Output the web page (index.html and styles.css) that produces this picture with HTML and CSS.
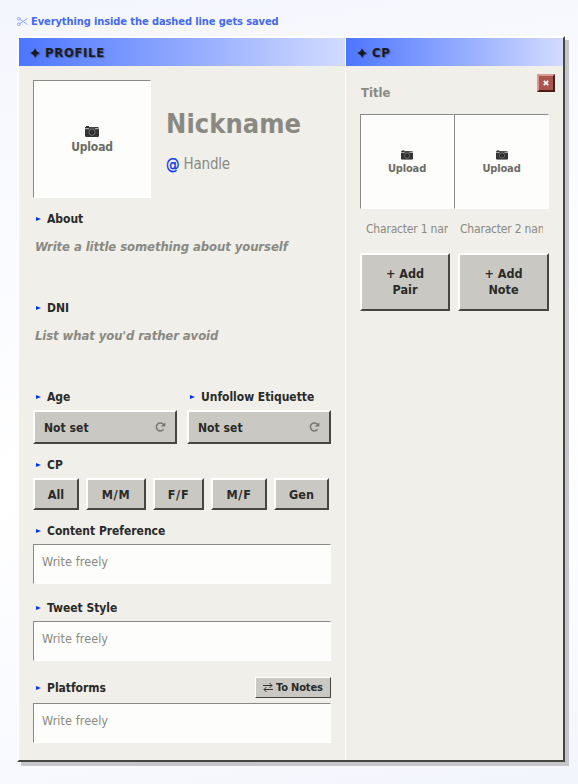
FILE: index.html
```html
<!DOCTYPE html>
<html lang="en">
<head>
<meta charset="utf-8">
<title>Profile editor</title>
<link rel="stylesheet" href="styles.css">
</head>
<body>
<svg class="defs" aria-hidden="true">
  <symbol id="camera" viewBox="0 0 14 11"><path d="M0 1h1V0h3v1h8.500q1.500 0 1.500 1.500V9.500Q14 11 12.500 11h-11Q0 11 0 9.500z" fill="#333"/><path d="M0 2h14v1.200H0z" fill="#aaa"/><path d="M4 1h6v3H4z" fill="#444"/><circle cx="7" cy="6.200" r="3" fill="#222" stroke="#999" stroke-width=".7"/><circle cx="7" cy="6.200" r="1" fill="#444"/></symbol>
  <symbol id="arrow" viewBox="0 0 5 4"><path d="M0 0 5 2 0 4z" fill="#0433ee"/></symbol>
  <symbol id="star" viewBox="0 0 10 10"><path d="M5 0Q6 4 10 5 6 6 5 10 4 6 0 5 4 4 5 0z" fill="#1c1c1c"/></symbol>
  <symbol id="reload" viewBox="0 0 11 10"><path d="M8.600 7.300A4 4 0 1 1 8.500 2.500" fill="none" stroke="#77776f" stroke-width="1.500"/><path d="M5.800 4.600H10.400V.6z" fill="#77776f"/></symbol>
</svg>
<p class="hint"><svg class="scissors" viewBox="0 0 11 9"><g fill="none" stroke="currentColor" stroke-width=".9"><circle cx="1.800" cy="1.700" r="1.300"/><circle cx="1.800" cy="7.300" r="1.300"/><path d="M3 2.400 10.500 7.600M3 6.600 10.500 1.400"/></g></svg><span>Everything inside the dashed line gets saved</span></p>
<main class="window">
  <section class="column profile">
    <h2 class="bar"><svg class="star"><use href="#star"/></svg>PROFILE</h2>
    <div class="body">
      <div class="identity">
        <div class="upload"><svg class="camera" viewBox="0 0 14 11"><use href="#camera"/></svg><span>Upload</span></div>
        <div class="names"><div class="nickname">Nickname</div><div class="handle"><span class="at">@</span><span>Handle</span></div></div>
      </div>
      <div class="label about"><svg><use href="#arrow"/></svg><span>About</span></div>
      <div class="prose">Write a little something about yourself</div>
      <div class="label"><svg><use href="#arrow"/></svg><span>DNI</span></div>
      <div class="prose">List what you'd rather avoid</div>
      <div class="pair">
        <div><div class="label"><svg><use href="#arrow"/></svg><span>Age</span></div><div class="select raised"><span>Not set</span><svg><use href="#reload"/></svg></div></div>
        <div><div class="label"><svg><use href="#arrow"/></svg><span>Unfollow Etiquette</span></div><div class="select raised"><span>Not set</span><svg><use href="#reload"/></svg></div></div>
      </div>
      <div class="label cp"><svg><use href="#arrow"/></svg><span>CP</span></div>
      <div class="chips"><div class="raised">All</div><div class="raised wide">M/M</div><div class="raised wide">F/F</div><div class="raised wide">M/F</div><div class="raised">Gen</div></div>
      <div class="label content"><svg><use href="#arrow"/></svg><span>Content Preference</span></div>
      <div class="field">Write freely</div>
      <div class="label tweet"><svg><use href="#arrow"/></svg><span>Tweet Style</span></div>
      <div class="field">Write freely</div>
      <div class="platforms"><div class="label"><svg><use href="#arrow"/></svg><span>Platforms</span></div><div class="to-notes"><svg viewBox="0 0 10 9"><path d="M0 2.500H9M6.500 0 9 2.500 6.500 5M10 6.500H1M3.500 4 1 6.500 3.500 9" fill="none" stroke="#333" stroke-width="1"/></svg><span>To Notes</span></div></div>
      <div class="field">Write freely</div>
    </div>
  </section>
  <section class="column side">
    <h2 class="bar"><svg class="star"><use href="#star"/></svg>CP</h2>
    <div class="body">
      <div class="title-row"><span class="title">Title</span><div class="close"><svg viewBox="0 0 6 6"><path d="M.8.8 5.200 5.200M5.200.8.8 5.200" stroke="#fff" stroke-width="1.800"/></svg></div></div>
      <div class="characters">
        <div><div class="upload small"><svg class="camera" viewBox="0 0 14 11"><use href="#camera"/></svg><span>Upload</span></div><div class="char-name">Character 1 name</div></div>
        <div><div class="upload small"><svg class="camera" viewBox="0 0 14 11"><use href="#camera"/></svg><span>Upload</span></div><div class="char-name">Character 2 name</div></div>
      </div>
      <div class="actions"><div class="raised">+ Add<br>Pair</div><div class="raised">+ Add<br>Note</div></div>
    </div>
  </section>
</main>
</body>
</html>
```
FILE: styles.css
```css
* { box-sizing: border-box; }
body { margin: 0; height: 784px; overflow: hidden; padding: 12px 13px 0 17px; background: linear-gradient(170deg, #f4f6fd 0%, #fafbff 28%, #fff 55%, #fafbff 80%, #f3f5fc 100%); color: #2a2a28; font: bold 12px/16px "DejaVu Sans Condensed", "DejaVu Sans", sans-serif; }
svg { display: block; flex: none; }
.defs { display: none; }
.hint { display: flex; align-items: center; height: 18px; margin: 0 0 6px; color: #4169f5; font-size: 11px; letter-spacing: -.09px; white-space: nowrap; }
.hint span { padding-top: 1px; }
.scissors { width: 11px; height: 9px; margin-right: 3px; opacity: .65; }
.window { display: grid; grid-template-columns: 327px 217px; width: 548px; height: 726px; border: 2px solid; border-color: #fff #464640 #464640 #fff; background: #f0efea; box-shadow: 4px 4px 0 #c5c5ca; }
.profile { border-right: 1px solid #fff; }
.bar { display: flex; align-items: center; height: 28px; margin: 0; padding: 2px 11px 0; background: linear-gradient(90deg, #4d76ff, #d2dbff); color: #1c1c1c; font-size: 13px; letter-spacing: .65px; text-shadow: 1px 1px 1px #0005; }
.star { width: 10px; height: 10px; margin-right: 5px; filter: drop-shadow(1px 1px .5px #0004); }
.profile .body { padding: 14px 14px 0; }
.identity { display: flex; gap: 15px; height: 118px; }
.upload { display: flex; flex-direction: column; align-items: center; justify-content: center; width: 118px; height: 118px; padding-top: 3px; background: #fdfdfb; border: 1px solid; border-color: #8a8a84 #fff #fff #8a8a84; color: #6c6c66; letter-spacing: -.15px; }
.camera { width: 14px; height: 11px; margin-bottom: 2px; }
.names { display: flex; flex-direction: column; padding-top: 26px; white-space: nowrap; }
.nickname { height: 36px; color: #898982; font-size: 27px; line-height: 36px; letter-spacing: .05px; }
.handle { display: flex; gap: 4px; margin-top: 12px; color: #898982; font-weight: normal; font-size: 15px; line-height: 20px; letter-spacing: -.2px; }
.at { color: #0433ee; font-size: 15px; letter-spacing: 0; -webkit-text-stroke: .3px #0433ee; }
.label { display: flex; align-items: center; height: 20px; padding-left: 3px; white-space: nowrap; letter-spacing: -.03px; }
.label span { padding-top: 2px; }
.label svg { width: 5px; height: 4px; margin: 1px 6px 0 0; }
.about { margin-top: 10px; }
.prose { height: 69px; padding: 11px 0 0 2px; color: #898982; font-style: italic; font-size: 13px; white-space: nowrap; letter-spacing: -.1px; }
.pair { display: grid; grid-template-columns: 144px 144px; gap: 10px; }
.raised { background: #c9c8c2; border: 2px solid; border-color: #fff #464640 #464640 #fff; }
.select { display: flex; align-items: center; justify-content: space-between; height: 34px; margin-top: 4px; padding: 0 9px; letter-spacing: .05px; }
.select span { padding-top: 2px; }
.select svg { width: 11px; height: 10px; }
.cp { margin-top: 10px; }
.chips { display: grid; grid-template-columns: 46px 60px 51px 56px 55px; grid-template-rows: 32px; gap: 7px; height: 32px; margin-top: 4px; font-size: 12.5px; line-height: 29px; text-align: center; }
.wide { letter-spacing: .7px; }
.content { margin-top: 10px; }
.field { height: 40px; margin-top: 4px; padding: 9px 8px; background: #fdfdfb; border: 1px solid; border-color: #8a8a84 #fff #fff #8a8a84; color: #898982; font-weight: normal; font-size: 12.5px; letter-spacing: .08px; }
.tweet { margin-top: 13px; }
.platforms { display: flex; align-items: center; justify-content: space-between; height: 22px; margin-top: 15px; margin-bottom: 5px; }
.to-notes { display: flex; align-items: center; gap: 3px; width: 76px; height: 21px; padding: 1px 0 0 7px; background: #c9c8c2; border: 1px solid; border-color: #fff #464640 #464640 #fff; font-size: 11px; letter-spacing: -.15px; white-space: nowrap; }
.to-notes svg { width: 10px; height: 9px; }
.side .body { padding: 8px 8px 0 14px; }
.title-row { display: flex; justify-content: space-between; height: 40px; }
.title { padding: 11px 0 0 1px; color: #898982; font-size: 13px; }
.close { display: grid; place-items: center; width: 18px; height: 18px; background: #aa554f; border: 2px solid; border-color: #d99a94 #4c1c19 #4c1c19 #d99a94; }
.close svg { width: 6px; height: 6px; }
.characters { display: grid; grid-template-columns: 94px 95px; }
.small { width: 100%; height: 95px; padding-top: 2px; font-size: 11px; line-height: 14px; }
.small .camera { width: 12px; height: 10px; }
.char-name { height: 16px; margin: 12px 6px 0; overflow: hidden; color: #898982; font-weight: normal; white-space: nowrap; letter-spacing: -.2px; }
.actions { display: grid; grid-template-columns: 90px 91px; gap: 8px; height: 58px; margin-top: 16px; text-align: center; font-size: 12.5px; }
.actions .raised { padding-top: 11px; }
```
